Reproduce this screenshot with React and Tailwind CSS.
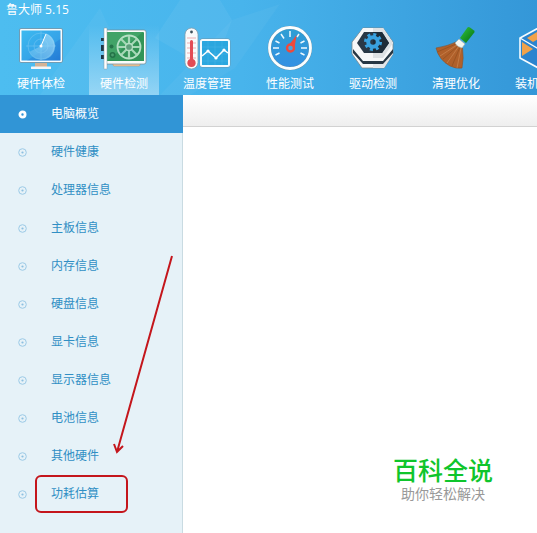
import React, { useState } from 'react';

const MonitorIcon = () => (
  <svg viewBox="0 0 48 46" className="w-12 h-[46px]" aria-hidden="true">
    <defs>
      <linearGradient id="screen" x1="0" y1="0" x2="1" y2="1">
        <stop offset="0" stopColor="#3cbaf0" />
        <stop offset="0.6" stopColor="#35a3e8" />
        <stop offset="1" stopColor="#2580d8" />
      </linearGradient>
      <linearGradient id="sweep" x1="0" y1="1" x2="1" y2="0">
        <stop offset="0" stopColor="#5fb8ec" />
        <stop offset="1" stopColor="#b6e4fb" />
      </linearGradient>
    </defs>
    <path d="M18 38h12v4H18z" fill="#d3b295" />
    <rect x="14" y="41.500" width="20" height="2.500" rx="0.500" fill="#f2f6f8" />
    <rect x="2.500" y="3.500" width="43" height="34" rx="1.500" fill="#f8fcfe" stroke="#6b94ab" strokeWidth="0.900" />
    <rect x="4.500" y="5.500" width="39" height="30" fill="url(#screen)" />
    <path d="M43.500 14v21.500H10Z" fill="#2272d0" opacity="0.300" />
    <g fill="none" stroke="#7cc8f2" strokeWidth="0.500">
      <circle cx="24" cy="21" r="13" />
      <circle cx="24" cy="21" r="7" />
      <path d="M9 21h30M24 6v29" />
    </g>
    <path d="M24 21L29 8.500A13.500 13.500 0 0 1 22 34.500A13 13 0 0 1 12 27Z" fill="url(#sweep)" opacity="0.650" />
    <path d="M24 21L29 9" stroke="#fff" strokeWidth="1" />
    <circle cx="24" cy="21" r="1.500" fill="#fff" />
  </svg>
);

const CardIcon = () => (
  <svg viewBox="0 0 48 46" className="w-12 h-[46px]" aria-hidden="true">
    <path d="M1 13h4v3H1zM1 20h4v6H1zM1 30h4v4H1z" fill="#1f3746" />
    <rect x="13" y="37" width="27" height="4" rx="1.500" fill="#f0c9a0" stroke="#c58d58" strokeWidth="0.500" />
    <rect x="5" y="5" width="41" height="34" rx="2" fill="#fafcfb" stroke="#6f8790" strokeWidth="0.700" />
    <path d="M7 7h36q1 0 1 1v28H7Z" fill="#329458" />
    <path d="M7 36V7h36Z" fill="#41a367" />
    <rect x="4" y="3" width="3" height="41" rx="0.500" fill="#fff" stroke="#84949c" strokeWidth="0.500" />
    <circle cx="11.500" cy="21.500" r="2" fill="#247348" />
    <circle cx="12.500" cy="30" r="3" fill="#247348" />
    <circle cx="12.500" cy="30" r="1.400" fill="#4b9e6e" />
    <circle cx="29" cy="22" r="11.500" fill="none" stroke="#b5e0c4" strokeWidth="1.800" />
    <path d="M29 11v22M18 22h22M21 14l16 16M37 14L21 30" stroke="#a6d8b7" strokeWidth="2.200" />
    <circle cx="29" cy="22" r="3.500" fill="#5f9f7c" stroke="#b5e0c4" strokeWidth="1.300" />
  </svg>
);

const TemperatureIcon = () => (
  <svg viewBox="0 0 48 46" className="w-12 h-[46px]" aria-hidden="true">
    <rect x="2" y="3" width="13" height="41" rx="6.500" fill="#f8fafb" stroke="#809cac" strokeWidth="0.800" />
    <circle cx="8.500" cy="7" r="1.400" fill="#3d4f5a" />
    <path d="M4 13h9M4 18h9M4 23h9M4 28h9M4 33h9" stroke="#edaeb2" strokeWidth="1" />
    <path d="M7 16.500a1.500 1.500 0 0 1 3 0V34a4.200 4.200 0 1 1-3 0Z" fill="#e34b55" />
    <rect x="18" y="15" width="28" height="26" rx="1.500" fill="#2ba7df" stroke="#6b94ab" strokeWidth="2.800" />
    <rect x="18" y="15" width="28" height="26" rx="1.500" fill="#2ba7df" stroke="#f5fcff" strokeWidth="2" />
    <path d="M25 16v24M32 16v24M39 16v24M19 22h26M19 29h26M19 36h26" stroke="#4bb7e6" strokeWidth="0.500" />
    <path d="M19 31l6-5 8 7 8-8 4 3" fill="none" stroke="#fff" strokeWidth="1.500" />
    <circle cx="25" cy="26" r="1.600" fill="#fff" />
    <circle cx="33" cy="33" r="1.600" fill="#fff" />
    <circle cx="41" cy="25" r="1.600" fill="#fff" />
  </svg>
);

const GaugeIcon = () => (
  <svg viewBox="0 0 48 46" className="w-12 h-[46px]" aria-hidden="true">
    <defs>
      <linearGradient id="dial" x1="0" y1="0" x2="0" y2="1">
        <stop offset="0" stopColor="#2e9fd3" />
        <stop offset="1" stopColor="#3390e4" />
      </linearGradient>
    </defs>
    <circle cx="24" cy="23" r="20.500" fill="url(#dial)" stroke="#638da6" strokeWidth="3.500" />
    <circle cx="24" cy="23" r="20.500" fill="none" stroke="#fafeff" strokeWidth="2.800" />
    <path d="M24 6v6M7 23h6M35 23h6M9.500 16l4 2M15 9l3 4.500M33 9l-2 3M38.500 16l-4 2M38.500 30l-4-2M9.500 30l4-2" stroke="#edf9ff" strokeWidth="1.500" />
    <path d="M22 21.500L30.500 10l-2 13Z" fill="#ef493b" />
    <circle cx="24.500" cy="23" r="3.500" fill="#4ba3dc" stroke="#ef493b" strokeWidth="2.400" />
  </svg>
);

const DriverIcon = () => (
  <svg viewBox="0 0 48 46" className="w-12 h-[46px]" aria-hidden="true">
    <path d="M14 3h20l10 14v12L35 43H13L3 29V17Z" fill="#f6f8f9" stroke="#7a858c" strokeWidth="0.800" />
    <path d="M24 36h11l9-12v5l-9 14H24Z" fill="#e3e7ea" />
    <path d="M4 24l10 12h20l10-12v4L34 39H14L4 28Z" fill="#273744" />
    <path d="M14 3h20l10 15-10 15H14L4 18Z" fill="#f6f7f8" />
    <path d="M24 3h10l10 15-10 15H24Z" fill="#dde1e4" />
    <path d="M15 7h18l7 11-7 10H15L8 18Z" fill="#293846" />
    <path d="M24 7h9l7 11-7 10h-9Z" fill="#1e2c38" />
    <circle cx="24" cy="17" r="7.500" fill="none" stroke="#39a1df" strokeWidth="3" strokeDasharray="3 2.890" />
    <circle cx="24" cy="17" r="4.800" fill="none" stroke="#39a1df" strokeWidth="4" />
  </svg>
);

const BroomIcon = () => (
  <svg viewBox="0 0 48 46" className="w-12 h-[46px]" aria-hidden="true">
    <defs>
      <linearGradient id="handle" x1="0" y1="0" x2="1" y2="1">
        <stop offset="0.300" stopColor="#24ab32" />
        <stop offset="0.600" stopColor="#149021" />
        <stop offset="1" stopColor="#0b681a" />
      </linearGradient>
    </defs>
    <path d="M35.500 2.500q1-1 2.500 0L42 5.500q1 1 .3 2L34 18l-6-5Z" fill="url(#handle)" />
    <path d="M24 17Q16 21 4 23q3 12 14 18 6 3 12 2 2-10 .5-20Z" fill="#b0602a" stroke="#8c4f27" strokeWidth="0.600" />
    <path d="M25 20L8 31M27 21L15 38M29 23l-4 20" stroke="#c37b45" strokeWidth="1" />
    <path d="M24 19L5 27M26 21L11 34M28 22l-8 19" stroke="#94501f" strokeWidth="0.800" />
    <path d="M27 14l6 5-3 4q-5-1-7-5Z" fill="#f3f6f0" stroke="#9eaaa3" strokeWidth="0.600" />
  </svg>
);

const BoxIcon = () => (
  <svg viewBox="0 0 48 46" className="w-12 h-[46px]" aria-hidden="true">
    <path d="M27 1l22 12v20L27 45 5 33V13Z" fill="#2b84cf" stroke="#f6fcff" strokeWidth="1.600" strokeLinejoin="round" />
    <path d="M12 13L27 4v8L18 17Z" fill="#f2a24a" />
    <path d="M27 4l15 9-15 9Z" fill="#e58b32" />
    <path d="M7 17l11 7-11 7Z" fill="#f2a24a" />
    <path d="M5 13l22 13 22-13M27 26v19" fill="none" stroke="#f6fcff" strokeWidth="1.300" />
  </svg>
);

const TABS = [
  { name: '硬件体检', Icon: MonitorIcon },
  { name: '硬件检测', Icon: CardIcon },
  { name: '温度管理', Icon: TemperatureIcon },
  { name: '性能测试', Icon: GaugeIcon },
  { name: '驱动检测', Icon: DriverIcon },
  { name: '清理优化', Icon: BroomIcon },
  { name: '装机必备', Icon: BoxIcon },
];

const MENU = [
  '电脑概览', '硬件健康', '处理器信息', '主板信息', '内存信息', '硬盘信息',
  '显卡信息', '显示器信息', '电池信息', '其他硬件', '功耗估算',
];

export default function App() {
  const [tab, setTab] = useState('硬件检测');
  const [item, setItem] = useState('电脑概览');

  return (
    <div className="relative min-h-screen flex flex-col bg-white overflow-hidden text-xs font-['Liberation_Sans','Noto_Sans_CJK_SC',sans-serif]">
      <header className="relative h-[95px] shrink-0 overflow-hidden bg-gradient-to-r from-[#4dbdf0] via-[#48b4ec] via-45% to-[#3497d8] text-white">
        {/* faceted light shapes behind the toolbar */}
        <svg className="absolute inset-0 w-full h-full" viewBox="0 0 537 95" preserveAspectRatio="none" aria-hidden="true">
          <path d="M55 72L100 8l40 87H40Z" fill="#fff" opacity="0.040" />
          <path d="M155 38L180 0h40l12 20-12 32-30 6Z" fill="#fff" opacity="0.050" />
          <path d="M232 20L280 4 235 68l-45 27h-30Z" fill="#fff" opacity="0.040" />
        </svg>
        <h1 className="relative h-[25px] pl-1.5 leading-[19px] font-['Open_Sans','Noto_Sans_CJK_SC',sans-serif]">鲁大师 5.15</h1>
        <nav className="relative flex gap-[13px] pl-1.5">
          {TABS.map(({ name, Icon }) => (
            <button
              key={name}
              type="button"
              onClick={() => setTab(name)}
              className={`w-[70px] h-[70px] shrink-0 flex flex-col items-center gap-1 ${tab === name ? 'bg-gradient-to-b from-white/0 to-white/40' : ''}`}
            >
              <Icon />
              <span className="leading-[18px]">{name}</span>
            </button>
          ))}
        </nav>
      </header>

      <div className="flex-1 flex">
        <aside className="w-[183px] shrink-0 bg-[#e6f2f8] shadow-[inset_-1px_0_0_#c9dbe2]">
          <ul>
            {MENU.map(name => (
              <li key={name} className="relative">
                <button
                  type="button"
                  onClick={() => setItem(name)}
                  className={`w-full h-[38px] flex items-center gap-6 pl-[18px] text-left ${item === name ? 'bg-[#3195d6] text-white' : 'text-[#308fc4]'}`}
                >
                  <svg viewBox="0 0 9 9" className="w-[9px] h-[9px]" aria-hidden="true">
                    {item === name ? (
                      <circle cx="4.500" cy="4.500" r="2.600" fill="none" stroke="#fff" strokeWidth="2.800" />
                    ) : (
                      <>
                        <circle cx="4.500" cy="4.500" r="3.800" fill="none" stroke="#9ccae6" strokeWidth="1" />
                        <circle cx="4.500" cy="4.500" r="1.100" fill="#8cbfe0" />
                      </>
                    )}
                  </svg>
                  <span>{name}</span>
                </button>
                {name === '功耗估算' && (
                  <span className="absolute left-[35px] top-0 w-[93px] h-[38px] border-2 border-[#c4161c] rounded-md pointer-events-none" />
                )}
              </li>
            ))}
          </ul>
        </aside>

        <main className="flex-1 flex flex-col">
          <div className="h-8 border-b border-[#d2d2d2] bg-gradient-to-b from-white to-[#efefef]" />
          <div className="flex-1 flex flex-col items-end justify-end pr-11 pb-[30px] font-['Noto_Sans_CJK_SC',sans-serif]">
            <div className="flex flex-col items-center">
              <p className="text-[25px] leading-7 font-medium text-[#0fc52c]">百科全说</p>
              <p className="text-sm leading-5 text-[#999]">助你轻松解决</p>
            </div>
          </div>
        </main>
      </div>

      {/* hand-drawn arrow to the last menu entry */}
      <svg className="absolute left-[110px] top-[254px] w-[66px] h-[202px] pointer-events-none" viewBox="0 0 66 202" aria-hidden="true">
        <path d="M62 2L7 198M4 190l3 8 6-6" fill="none" stroke="#c4161c" strokeWidth="2" />
      </svg>
    </div>
  );
}
